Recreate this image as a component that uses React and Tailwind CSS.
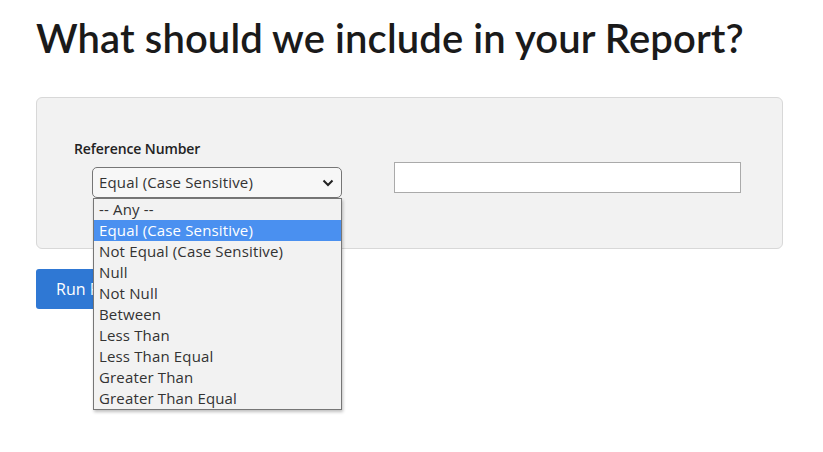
import { useState } from 'react';

const options = [
    '-- Any --',
    'Equal (Case Sensitive)',
    'Not Equal (Case Sensitive)',
    'Null',
    'Not Null',
    'Between',
    'Less Than',
    'Less Than Equal',
    'Greater Than',
    'Greater Than Equal',
];

export default function App() {
    const [selected] = useState(1);

    return (
        <div className="min-h-[452px] bg-white pl-[36px] pr-[40px] pt-[14px] font-['Open_Sans',sans-serif] text-[#333]">
            <h1 className="font-['Lato',sans-serif] text-[40px] leading-[48px] font-semibold tracking-[0.1px] text-[#1a1a1a]">
                What should we include in your Report?
            </h1>

            <div className="mt-[35px] w-[747px] h-[152px] rounded-[6px] border border-[#d8d8d8] bg-[#f2f2f2] pl-[37px] pt-[42px]">
                <div className="flex">
                    <div className="w-[320px]">
                        <div className="text-[14px] leading-[17px] font-semibold tracking-[-0.1px] text-[#222]">Reference Number</div>
                        <div className="relative ml-[18px] mt-[10px] w-[250px]">
                            <div className="flex h-[31px] items-center justify-between rounded-[5px] border border-[#767676] bg-[#f7f7f7] pl-[6px] pr-[6px] text-[15px] tracking-[0.15px] text-[#333]">
                                <span>{options[selected]}</span>
                                <svg width="12" height="8" viewBox="0 0 12 8" className="mr-[1px]">
                                    <path d="M1.5 1.5 L6 6 L10.5 1.5" fill="none" stroke="#222" strokeWidth="2" />
                                </svg>
                            </div>
                            <ul className="absolute left-[1px] top-[31px] z-10 w-[249px] border border-[#767676] bg-[#f2f2f2] shadow-[1px_2px_3px_rgba(0,0,0,0.25)]">
                                {options.map((o, i) => (
                                    <li
                                        key={o}
                                        className={`h-[21px] pl-[5px] text-[15px] leading-[21px] tracking-[0.15px] ${
                                            i === selected ? 'bg-[#4a90f0] text-white' : 'text-[#333]'
                                        }`}
                                    >
                                        {o}
                                    </li>
                                ))}
                            </ul>
                        </div>
                    </div>
                    <input
                        type="text"
                        className="mt-[22px] h-[31px] w-[347px] border border-[#aaaaaa] bg-white"
                    />
                </div>
            </div>

            <button
                type="button"
                className="mt-[20px] h-[40px] rounded-[3px] bg-[#2f78d4] px-[20px] text-[16px] text-white"
            >
                Run Report
            </button>
        </div>
    );
}
